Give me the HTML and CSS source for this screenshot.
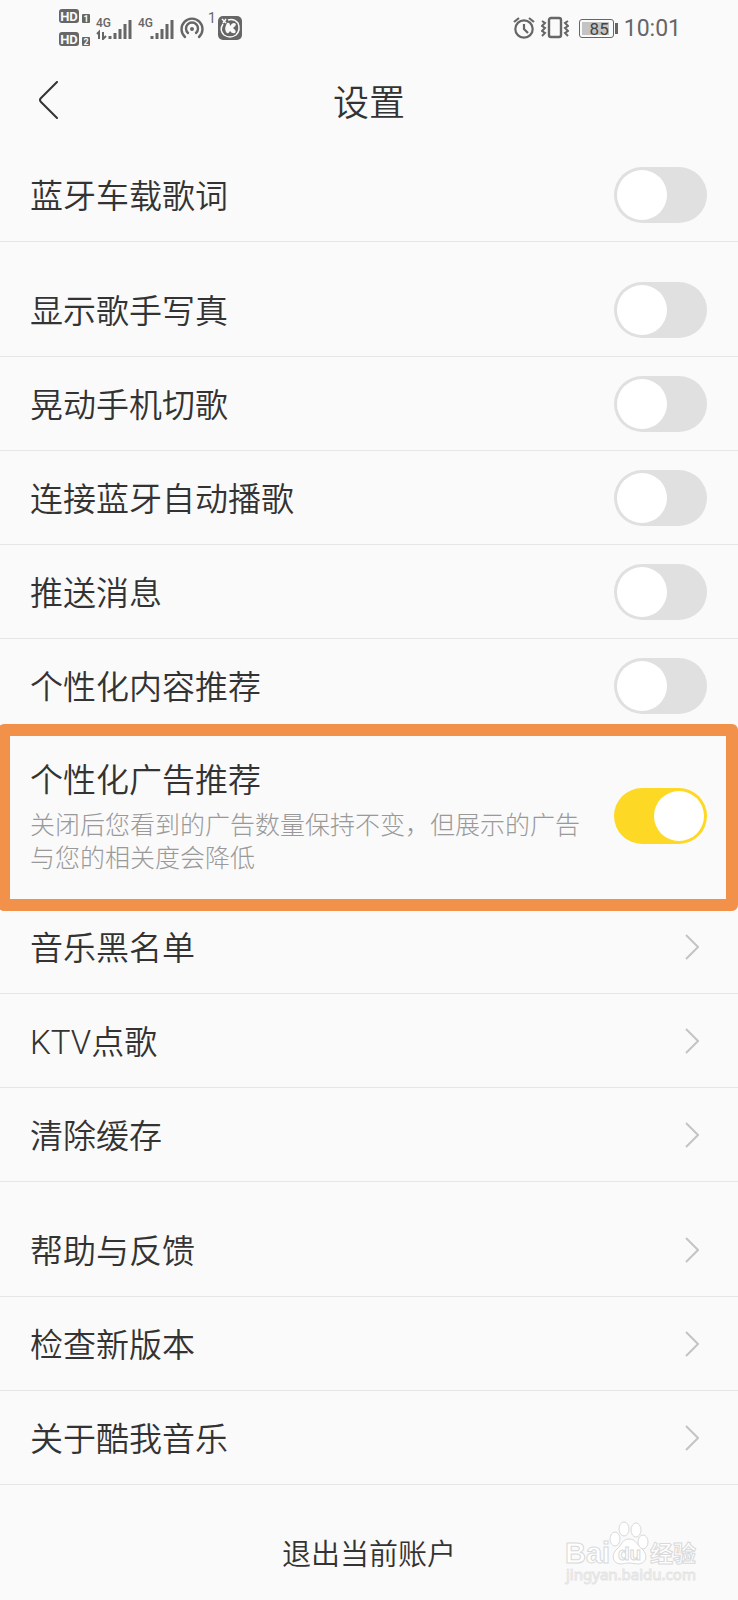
FILE: index.html
```html
<!DOCTYPE html>
<html lang="zh-CN">
<head>
    <meta charset="UTF-8">
    <meta name="viewport" content="width=device-width, initial-scale=1">
    <title>设置</title>
    <link rel="stylesheet" href="styles.css">
</head>
<body>
    <div class="status-bar">
        <div class="status-left">
            <svg class="icon-hd" width="31" height="38" viewBox="0 0 31 38">
                <rect x="0" y="0" width="20" height="14" rx="3"/>
                <rect x="23" y="5" width="8" height="9" rx="1"/>
                <rect x="0" y="23" width="20" height="14" rx="3"/>
                <rect x="23" y="28" width="8" height="9" rx="1"/>
                <text x="10" y="12" font-size="13">HD</text>
                <text x="27" y="13" font-size="9">1</text>
                <text x="10" y="35" font-size="13">HD</text>
                <text x="27" y="36" font-size="9">2</text>
            </svg>
            <svg class="icon-signal" width="36" height="24" viewBox="0 0 36 24">
                <text x="0" y="11">4G</text>
                <path d="M1 18l2-2v7M7 16v7l3-3" stroke-width="2"/>
                <path d="M14 20v3M19 17v6M24 13v10M29 8v15M34 4v19" stroke-width="3"/>
            </svg>
            <svg class="icon-signal" width="36" height="24" viewBox="0 0 36 24">
                <text x="0" y="11">4G</text>
                <path d="M14 20v3M19 17v6M24 13v10M29 8v15M34 4v19" stroke-width="3"/>
            </svg>
            <div class="hotspot">
                <svg width="24" height="22" viewBox="0 0 24 22" fill="none" stroke="#666" stroke-width="2.4" stroke-linecap="round">
                    <path d="M5 20a10.5 10.5 0 1 1 14 0"/>
                    <path d="M8 16a6 6 0 1 1 8 0"/>
                    <circle cx="12" cy="12" r="2" fill="#666" stroke="none"/>
                </svg>
                <span>1</span>
            </div>
            <svg width="24" height="24" viewBox="0 0 24 24" fill="none">
                <rect width="24" height="24" rx="5" fill="#666"/>
                <path d="M5 8Q1 14 6 19Q12 23 18 19Q23 14 20 7Q16 2 10 4" stroke="#fafafa" stroke-width="1.5"/>
                <path d="M9 7Q12 6 12 10Q15 5 18 8Q18 10 15 12Q19 15 17 17Q14 18 12 15Q10 19 8 16Q6 12 9 7z" fill="#fafafa"/>
                <path d="M4 3l4 4M8 3L5 7" stroke="#fafafa" stroke-width="1.5"/>
            </svg>
        </div>
        <div class="status-right">
            <svg width="22" height="24" viewBox="0 0 22 24" fill="none" stroke="#666" stroke-width="2.2">
                <circle cx="11" cy="13" r="8.7"/>
                <path d="M11 8v5l4 4M1 6l5-4M21 6l-5-4"/>
            </svg>
            <svg width="28" height="24" viewBox="0 0 28 24" fill="none" stroke="#666" stroke-width="2.4">
                <rect x="8" y="2" width="12" height="19" rx="2"/>
                <path d="M1 5l3 2-3 3 3 2-3 3 3 2-3 3M27 5l-3 2 3 3-3 2 3 3-3 2 3 3" stroke-width="2"/>
            </svg>
            <div class="battery">
                <span>85</span>
            </div>
            <span class="clock">10:01</span>
        </div>
    </div>

    <header class="header">
        <button class="back-btn" type="button" aria-label="返回">
            <svg width="20" height="38" viewBox="0 0 20 38" fill="none" stroke="#333" stroke-width="2" stroke-linecap="round">
                <path d="M18 1L2 17Q0 19 2 21L18 37"/>
            </svg>
        </button>
        <h1>设置</h1>
    </header>

    <main>
        <section class="group">
            <div class="row">
                <label class="row-title" for="car-lyrics">蓝牙车载歌词</label>
                <input class="switch" type="checkbox" id="car-lyrics">
            </div>
        </section>

        <section class="group">
            <div class="row">
                <label class="row-title" for="singer-photo">显示歌手写真</label>
                <input class="switch" type="checkbox" id="singer-photo">
            </div>
            <div class="row">
                <label class="row-title" for="shake">晃动手机切歌</label>
                <input class="switch" type="checkbox" id="shake">
            </div>
            <div class="row">
                <label class="row-title" for="auto-play">连接蓝牙自动播歌</label>
                <input class="switch" type="checkbox" id="auto-play">
            </div>
            <div class="row">
                <label class="row-title" for="push">推送消息</label>
                <input class="switch" type="checkbox" id="push">
            </div>
            <div class="row">
                <label class="row-title" for="content-rec">个性化内容推荐</label>
                <input class="switch" type="checkbox" id="content-rec">
            </div>
            <div class="row row-ad">
                <div class="row-text">
                    <label for="ad-rec">个性化广告推荐</label>
                    <p>关闭后您看到的广告数量保持不变，但展示的广告与您的相关度会降低</p>
                </div>
                <input class="switch" type="checkbox" id="ad-rec" checked>
            </div>
            <a class="row" href="#">
                <span class="row-title">音乐黑名单</span>
                <svg class="arrow" viewBox="0 0 14 26"><path d="M1 1l12 12L1 25"/></svg>
            </a>
            <a class="row" href="#">
                <span class="row-title">KTV点歌</span>
                <svg class="arrow" viewBox="0 0 14 26"><path d="M1 1l12 12L1 25"/></svg>
            </a>
            <a class="row" href="#">
                <span class="row-title">清除缓存</span>
                <svg class="arrow" viewBox="0 0 14 26"><path d="M1 1l12 12L1 25"/></svg>
            </a>
        </section>

        <section class="group">
            <a class="row" href="#">
                <span class="row-title">帮助与反馈</span>
                <svg class="arrow" viewBox="0 0 14 26"><path d="M1 1l12 12L1 25"/></svg>
            </a>
            <a class="row" href="#">
                <span class="row-title">检查新版本</span>
                <svg class="arrow" viewBox="0 0 14 26"><path d="M1 1l12 12L1 25"/></svg>
            </a>
            <a class="row" href="#">
                <span class="row-title">关于酷我音乐</span>
                <svg class="arrow" viewBox="0 0 14 26"><path d="M1 1l12 12L1 25"/></svg>
            </a>
        </section>
    </main>

    <footer class="footer">
        <button class="logout-btn" type="button">退出当前账户</button>
        <svg class="watermark" width="136" height="66" viewBox="0 0 136 66">
            <text class="wm-brand" x="1" y="42" font-size="29">Bai</text>
            <g>
                <ellipse cx="51" cy="18" rx="5" ry="7"/>
                <ellipse cx="60" cy="8" rx="5" ry="7"/>
                <ellipse cx="72" cy="9" rx="5" ry="7"/>
                <ellipse cx="79" cy="21" rx="5" ry="7"/>
                <path d="M65 18c-7 0-7 6-12 10-6 5-5 14 3 15 4 0 5-1 9-1s6 1 10 1c8-1 9-10 3-15-5-4-6-10-13-10z"/>
            </g>
            <text class="wm-brand" x="54" y="39" font-size="19">du</text>
            <text class="wm-brand" x="86" y="41" font-size="23">经验</text>
            <text class="wm-url" x="2" y="59" font-size="15">jingyan.baidu.com</text>
        </svg>
    </footer>
</body>
</html>
```

FILE: styles.css
```css
* {
    box-sizing: border-box;
}

body {
    font-family: Roboto, "Noto Sans CJK SC", sans-serif;
    font-weight: 350;
    background-color: #fafafa;
    color: #333;
    margin: 0;
    min-height: 100vh;
}

/* status bar */
.status-bar {
    display: flex;
    justify-content: space-between;
    align-items: center;
    height: 56px;
    padding: 0 57px 0 59px;
    color: #666;
}

.status-left,
.status-right {
    display: flex;
    align-items: center;
    gap: 6px;
}

.icon-hd rect {
    fill: #666;
}

.icon-hd text {
    fill: #fafafa;
    font-family: Roboto, sans-serif;
    font-weight: 700;
    text-anchor: middle;
}

.icon-signal path {
    fill: none;
    stroke: #666;
}

.icon-signal text {
    fill: #666;
    font-family: Roboto, sans-serif;
    font-weight: 500;
    font-size: 12px;
}

.hotspot {
    display: flex;
    align-items: center;
    gap: 4px;
}

.hotspot span {
    font-size: 14px;
    font-weight: 400;
    line-height: 14px;
    padding-bottom: 20px;
    width: 4px;
}

.battery {
    display: flex;
    position: relative;
    width: 35px;
    height: 19px;
    padding: 2px;
    margin-left: 4px;
    margin-right: 4px;
    border: 1px solid #666;
    border-radius: 3px;
}

.battery::after {
    content: "";
    position: absolute;
    right: -5px;
    top: 3px;
    width: 3px;
    height: 11px;
    background-color: #666;
}

.battery span {
    width: 27px;
    background-color: #c4c4c4;
    color: #444;
    font-size: 17px;
    font-weight: 400;
    line-height: 14px;
    text-align: right;
}

.clock {
    font-size: 23px;
    font-weight: 400;
}

/* page header */
.header {
    display: grid;
    grid-template-columns: 1fr auto 1fr;
    align-items: center;
    height: 92px;
    padding: 0 32px 4px;
}

.header h1 {
    margin: 0;
    font-size: 36px;
    font-weight: 350;
}

button {
    border: none;
    background: none;
    color: inherit;
    font-family: inherit;
    font-weight: inherit;
    cursor: pointer;
}

.back-btn {
    justify-self: start;
    display: flex;
    padding: 0 7px;
}

/* settings list */
.group + .group {
    margin-top: 21px;
}

.row {
    display: flex;
    justify-content: space-between;
    align-items: center;
    min-height: 94px;
    padding: 0 31px 0 30px;
    border-bottom: 1px solid #e6e6e6;
    color: inherit;
    font-size: 33px;
    line-height: 48px;
    text-decoration: none;
}

.row-title {
    padding-top: 5px;
}

.row-ad {
    position: relative;
    min-height: 167px;
}

/* orange frame lies over the edges of the neighbour rows */
.row-ad::after {
    content: "";
    position: absolute;
    top: -9px;
    right: 0;
    bottom: -12px;
    left: -2px;
    border: 12px solid #f29149;
    border-radius: 6px;
    pointer-events: none;
}

.row-text {
    flex: 1;
    padding-right: 24px;
}

.row-text p {
    margin: 4px 0 0;
    color: #999;
    font-size: 25px;
    font-weight: 300;
    line-height: 33px;
}

.switch {
    appearance: none;
    flex: none;
    display: flex;
    align-items: center;
    width: 93px;
    height: 56px;
    margin: 0;
    padding: 0 3px;
    border-radius: 28px;
    background-color: #e0e0e0;
    cursor: pointer;
}

.switch::before {
    content: "";
    width: 50px;
    height: 50px;
    border-radius: 50%;
    background-color: #fff;
}

.switch:checked {
    justify-content: flex-end;
    background-color: #fdd926;
}

.arrow {
    width: 14px;
    height: 26px;
    margin-right: 8px;
    fill: none;
    stroke: #c4c4c4;
    stroke-width: 2;
}

/* footer */
.footer {
    position: relative;
    display: flex;
    justify-content: center;
    padding-top: 20px;
}

.logout-btn {
    height: 94px;
    font-size: 29px;
}

.watermark {
    position: absolute;
    right: 38px;
    bottom: 12px;
    fill: #fff;
    stroke: #d9d9d9;
    stroke-width: 1;
}

.wm-brand {
    font-family: "Liberation Sans", "Noto Sans CJK SC", sans-serif;
    font-weight: 700;
}

.wm-url {
    font-family: "Noto Sans", sans-serif;
    font-weight: 400;
    stroke: #e4e4e4;
}
```
